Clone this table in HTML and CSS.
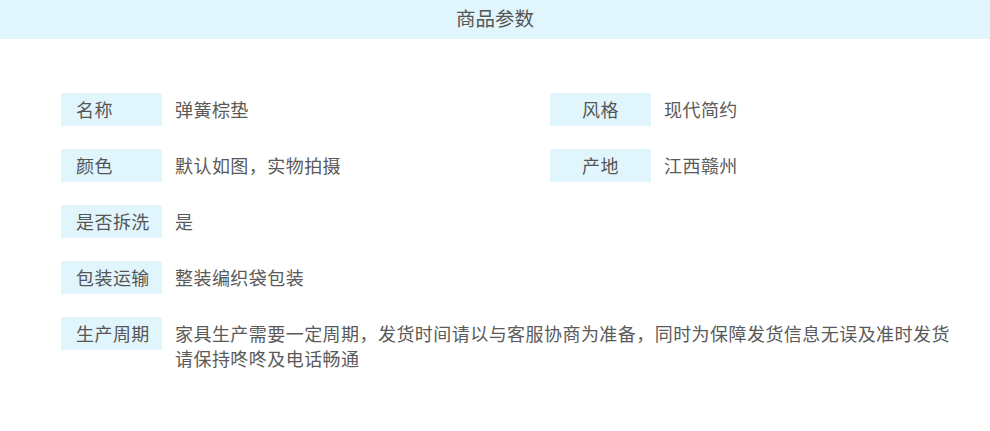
FILE: index.html
```html
<!DOCTYPE html>
<html lang="zh-CN">
<head>
<meta charset="utf-8">
<title>商品参数</title>
<link rel="stylesheet" href="styles.css">
</head>
<body>
<div class="header">商品参数</div>
<div class="params">
  <div class="row">
    <div class="label">名称</div>
    <div class="value">弹簧棕垫</div>
  </div>
  <div class="row">
    <div class="label center">风格</div>
    <div class="value">现代简约</div>
  </div>
  <div class="row">
    <div class="label">颜色</div>
    <div class="value">默认如图，实物拍摄</div>
  </div>
  <div class="row">
    <div class="label center">产地</div>
    <div class="value">江西赣州</div>
  </div>
  <div class="row full">
    <div class="label">是否拆洗</div>
    <div class="value">是</div>
  </div>
  <div class="row full">
    <div class="label">包装运输</div>
    <div class="value">整装编织袋包装</div>
  </div>
  <div class="row full">
    <div class="label">生产周期</div>
    <div class="value">家具生产需要一定周期，发货时间请以与客服协商为准备，同时为保障发货信息无误及准时发货请保持咚咚及电话畅通</div>
  </div>
</div>
</body>
</html>
```
FILE: styles.css
```css
* { box-sizing: border-box; }
html, body {
  margin: 0;
  padding: 0;
  background: #fff;
  font-family: "Noto Sans CJK SC", "Noto Sans", sans-serif;
  color: #555;
}
.header {
  height: 39px;
  line-height: 36px;
  background: #e1f5fd;
  text-align: center;
  font-size: 19.5px;
  color: #555;
}
.params {
  display: grid;
  grid-template-columns: 489px 1fr;
  row-gap: 23px;
  padding: 54px 25px 0 61px;
}
.row {
  display: flex;
  align-items: flex-start;
  gap: 13px;
}
.row.full {
  grid-column: 1 / -1;
}
.label {
  flex: none;
  width: 101px;
  height: 33px;
  line-height: 33px;
  padding-left: 15px;
  background: #e1f5fd;
  font-size: 18px;
  letter-spacing: 0.45px;
  color: #555;
  white-space: nowrap;
}
.label.center {
  padding-left: 0;
  text-align: center;
}
.value {
  flex: 1;
  min-width: 0;
  padding-top: 4px;
  font-size: 18px;
  letter-spacing: 0.45px;
  line-height: 25px;
  color: #5a5a5a;
}
```
